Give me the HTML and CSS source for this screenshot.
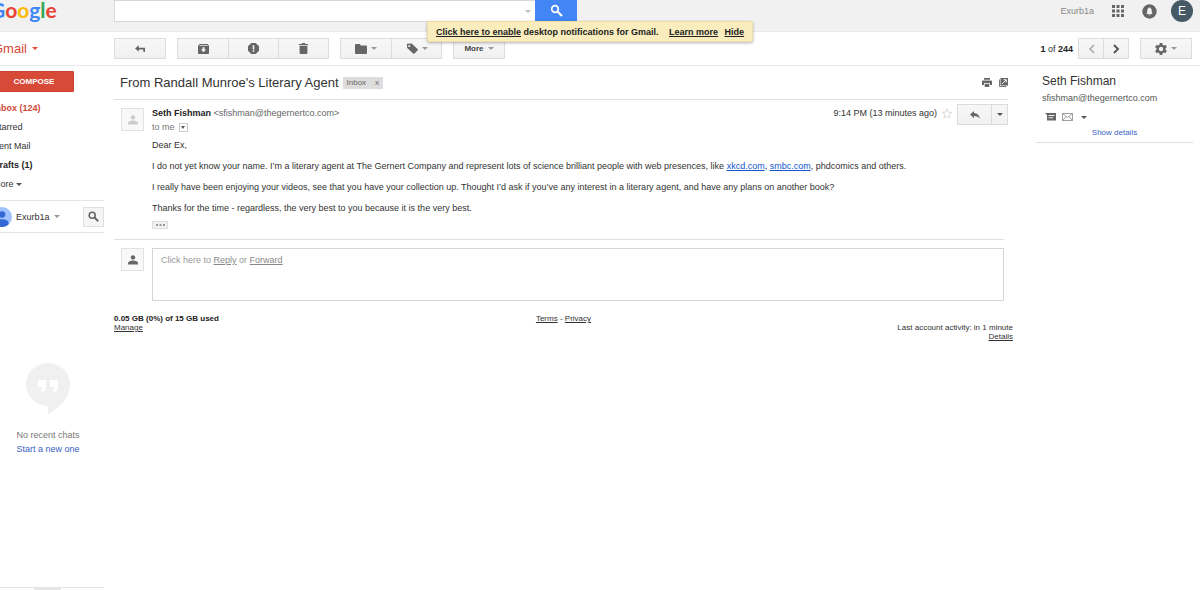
FILE: index.html
```html
<!DOCTYPE html>
<html lang="en">
<head>
  <meta charset="UTF-8" />
  <title>Gmail</title>
  <link rel="stylesheet" href="styles.css">
</head>
<body>

  <header class="topbar">
    <a class="logo" href="#" aria-label="Google"><span class="blue">G</span><span class="red">o</span><span class="yellow">o</span><span class="blue">g</span><span class="green">l</span><span class="red">e</span></a>
    <form class="search">
      <div class="search-box">
        <input type="text" aria-label="Search mail" />
        <span class="caret light"></span>
      </div>
      <button type="button" aria-label="Search">
        <svg width="13" height="13" viewBox="0 0 13 13"><circle cx="5" cy="5" r="3.3" fill="none" stroke="#fff" stroke-width="1.7"/><path d="M7.5 7.5L12 12" stroke="#fff" stroke-width="2.2"/></svg>
      </button>
    </form>
    <nav class="account">
      <a class="account-name" href="#">Exurb1a</a>
      <button type="button" aria-label="Apps">
        <svg width="12" height="12" viewBox="0 0 12 12" fill="#666"><path d="M0 0h3v3H0zM4.500 0h3v3h-3zM9 0h3v3H9zM0 4.500h3v3H0zM4.500 4.500h3v3h-3zM9 4.500h3v3H9zM0 9h3v3H0zM4.500 9h3v3h-3zM9 9h3v3H9z"/></svg>
      </button>
      <button type="button" aria-label="Notifications">
        <svg width="15" height="15" viewBox="0 0 15 15"><circle cx="7.500" cy="7.500" r="7.200" fill="#666"/><path d="M4.300 10h6.400l-.9-1.200V6.700c0-1.400-.7-2.300-1.700-2.600v-.6H6.900v.6c-1 .3-1.700 1.200-1.700 2.600v2.100zM6.600 10.500h1.800v.8H6.600z" fill="#f1f1f1"/></svg>
      </button>
      <button type="button" class="avatar">E</button>
    </nav>
  </header>

  <div class="notice">
    <a href="#">Click here to enable</a> desktop notifications for Gmail. <a class="learn" href="#">Learn more</a> <a class="hide" href="#">Hide</a>
  </div>

  <div class="toolbar">
    <button type="button" class="brand">Gmail <span class="caret red-caret"></span></button>
    <div class="group">
      <button type="button" aria-label="Back to Inbox">
        <svg width="11" height="8" viewBox="0 0 11 8"><path d="M0 3.500L3.800 .3v2.400H10V7H8.300V4.400H3.800v2.300z" fill="#666"/></svg>
      </button>
    </div>
    <div class="group">
      <button type="button" aria-label="Archive">
        <svg width="11" height="10" viewBox="0 0 11 10"><path d="M1.500 0h8L11 1.800V9q0 1-1 1H1q-1 0-1-1V1.800zM1.700 1.100l-.5.6h8.600l-.5-.6zM4.500 3.300v2.200H2.800l2.700 2.700 2.700-2.700H6.500V3.300z" fill="#666" fill-rule="evenodd"/></svg>
      </button>
      <button type="button" aria-label="Report spam">
        <svg width="11" height="11" viewBox="0 0 11 11"><path d="M3.300 0h4.400L11 3.300v4.400L7.700 11H3.300L0 7.700V3.300z" fill="#666"/><path d="M4.700 2.200h1.600v4.200H4.700zM4.700 7.300h1.600v1.500H4.700z" fill="#f4f4f4"/></svg>
      </button>
      <button type="button" aria-label="Delete">
        <svg width="9" height="11" viewBox="0 0 9 11" fill="#666"><path d="M0 1h2.500l.7-1h2.600l.7 1H9v1.300H0zM.6 3h7.800v7q0 1-1 1H1.600q-1 0-1-1z"/></svg>
      </button>
    </div>
    <div class="group">
      <button type="button" aria-label="Move to">
        <svg width="12" height="10" viewBox="0 0 12 10"><path d="M1 0h3.700L6 1.400h5q1 0 1 1V9q0 1-1 1H1Q0 10 0 9V1q0-1 1-1z" fill="#666"/></svg>
        <span class="caret"></span>
      </button>
      <button type="button" aria-label="Labels">
        <svg width="12" height="11" viewBox="0 0 12 11"><path d="M.8.8L5.700.4l5.800 5.600q.7.700 0 1.400l-3 3q-.7.700-1.400 0L1.200 5zM3.200 1.900a1.100 1.100 0 100 2.200 1.100 1.100 0 000-2.200z" fill="#666" fill-rule="evenodd"/></svg>
        <span class="caret"></span>
      </button>
    </div>
    <div class="group">
      <button type="button" class="more">More <span class="caret"></span></button>
    </div>
    <div class="pager"><b>1</b> of <b>244</b></div>
    <div class="group narrow">
      <button type="button" aria-label="Newer">
        <svg width="7" height="10" viewBox="0 0 7 10"><path d="M6 1L2 5l4 4" fill="none" stroke="#aaa" stroke-width="1.600"/></svg>
      </button>
      <button type="button" aria-label="Older">
        <svg width="7" height="10" viewBox="0 0 7 10"><path d="M1 1l4 4-4 4" fill="none" stroke="#555" stroke-width="1.900"/></svg>
      </button>
    </div>
    <div class="group">
      <button type="button" aria-label="Settings">
        <svg width="12" height="12" viewBox="0 0 12 12"><circle cx="6" cy="6" r="3.400" fill="none" stroke="#666" stroke-width="2.400"/><path d="M6 0v2M6 10v2M.8 3l1.700 1M9.500 8l1.700 1M.8 9l1.700-1M9.500 4l1.700-1" stroke="#666" stroke-width="2.800"/></svg>
        <span class="caret"></span>
      </button>
    </div>
  </div>

  <div class="layout">
    <aside class="sidebar">
      <button type="button" class="compose">COMPOSE</button>
      <nav class="folders">
        <a class="current" href="#">Inbox (124)</a>
        <a href="#">Starred</a>
        <a href="#">Sent Mail</a>
        <a class="unread" href="#">Drafts (1)</a>
        <a href="#">More <span class="caret dark"></span></a>
      </nav>
      <div class="chat-user">
        <svg width="20" height="20" viewBox="0 0 20 20"><circle cx="10" cy="10" r="10" fill="#a0c3ff"/><circle cx="10" cy="7.500" r="3.300" fill="#3367d6"/><path d="M3.500 17.500v-1.700c0-2.400 3-3.600 6.500-3.600s6.500 1.200 6.500 3.600v1.700Q13.500 20 10 20t-6.500-2.500z" fill="#3367d6"/></svg>
        <span>Exurb1a</span>
        <span class="caret"></span>
        <button type="button" aria-label="Search chats">
          <svg width="11" height="11" viewBox="0 0 11 11"><circle cx="4.200" cy="4.200" r="3" fill="none" stroke="#666" stroke-width="1.600"/><path d="M6.400 6.400l3.800 3.800" stroke="#666" stroke-width="2"/></svg>
        </button>
      </div>
      <div class="chats">
        <svg width="44" height="51" viewBox="0 0 44 51"><path d="M22 0a22 21.500 0 0122 21.500C44 34 34 45 22 51v-8A22 21.500 0 0122 0z" fill="#f0f0f0"/><path d="M12 17h8v7q0 4-5 5.500v-2.300q2-.9 2-3.200h-5zM24 17h8v7q0 4-5 5.500v-2.300q2-.9 2-3.200h-5z" fill="#fff"/></svg>
        <p>No recent chats</p>
        <a href="#">Start a new one</a>
      </div>
      <div class="chat-tabs"></div>
    </aside>

    <main class="main">
      <div class="subject">
        <h1>From Randall Munroe's Literary Agent</h1>
        <span class="label">Inbox <button type="button" aria-label="Remove label">x</button></span>
        <div class="subject-tools">
          <button type="button" aria-label="Print all">
            <svg width="10" height="9" viewBox="0 0 10 9"><path d="M2 0h6v1.800H2zM1 2.400h8q1 0 1 1V7H8V5H2v2H0V3.400q0-1 1-1zM2.700 5.700h4.600V9H2.700z" fill="#666"/></svg>
          </button>
          <button type="button" aria-label="In new window">
            <svg width="9" height="9" viewBox="0 0 9 9"><path d="M1.500 0H9v7.500H1.500z" fill="#666"/><path d="M.500 1.500v7h7" fill="none" stroke="#777"/><path d="M4.500 1.700h2.800v2.800M7 2L3 6" fill="none" stroke="#fff" stroke-width=".9"/></svg>
          </button>
        </div>
      </div>

      <article class="message">
        <div class="portrait faded">
          <svg width="10" height="10" viewBox="0 0 10 10"><circle cx="5" cy="2.400" r="2.200"/><path d="M0 9.500V8.300C0 6.500 2.700 5.600 5 5.600s5 .9 5 2.700v1.200z"/></svg>
        </div>
        <div class="message-content">
          <div class="message-head">
            <div class="from">
              <p><b>Seth Fishman</b> <span class="address">&lt;sfishman@thegernertco.com&gt;</span></p>
              <p class="to">to me <button type="button" aria-label="Show details"><span class="caret dark"></span></button></p>
            </div>
            <span class="time">9:14 PM (13 minutes ago)</span>
            <button type="button" class="star" aria-label="Star">
              <svg width="12" height="11" viewBox="0 0 12 11"><path d="M6 .8l1.300 3.300 3.600.2-2.800 2.200 1 3.500L6 8.100 2.900 10l1-3.500L1.100 4.300l3.600-.2z" fill="#fff" stroke="#d0d0d0" stroke-width=".8"/></svg>
            </button>
            <div class="group reply-group">
              <button type="button" aria-label="Reply">
                <svg width="10" height="8" viewBox="0 0 10 8"><path d="M4 0v2.100C7.600 2.500 9.400 4.600 9.800 8 8.400 6 6.800 5.100 4 5.100v2.100L0 3.600z" fill="#666"/></svg>
              </button>
              <button type="button" aria-label="More actions"><span class="caret dark"></span></button>
            </div>
          </div>
          <div class="message-text">
            <p>Dear Ex,</p>
            <p>I do not yet know your name. I’m a literary agent at The Gernert Company and represent lots of science brilliant people with web presences, like <a href="#">xkcd.com</a>, <a href="#">smbc.com</a>, phdcomics and others.</p>
            <p>I really have been enjoying your videos, see that you have your collection up. Thought I’d ask if you’ve any interest in a literary agent, and have any plans on another book?</p>
            <p>Thanks for the time - regardless, the very best to you because it is the very best.</p>
          </div>
          <button type="button" class="trimmed" aria-label="Show trimmed content">
            <svg width="9" height="2" viewBox="0 0 9 2" fill="#999"><path d="M0 0h2v2H0zM3.500 0h2v2h-2zM7 0h2v2H7z"/></svg>
          </button>
        </div>
      </article>

      <section class="reply">
        <div class="portrait">
          <svg width="10" height="10" viewBox="0 0 10 10"><circle cx="5" cy="2.400" r="2.200"/><path d="M0 9.500V8.300C0 6.500 2.700 5.600 5 5.600s5 .9 5 2.700v1.200z"/></svg>
        </div>
        <div class="reply-box">Click here to <a href="#">Reply</a> or <a href="#">Forward</a></div>
      </section>

      <footer class="footer">
        <div><b>0.05 GB (0%) of 15 GB used</b><br><a href="#">Manage</a></div>
        <div class="legal"><a href="#">Terms</a> - <a href="#">Privacy</a></div>
        <div class="activity">Last account activity: in 1 minute<br><a href="#">Details</a></div>
      </footer>
    </main>

    <aside class="person">
      <h2>Seth Fishman</h2>
      <p>sfishman@thegernertco.com</p>
      <div class="person-tools">
        <button type="button" aria-label="Chat">
          <svg width="11" height="8" viewBox="0 0 11 8"><path d="M0 0h11v7.500H2V2z" fill="#666"/><path d="M3.500 2.500h6M3.500 4.800h4.500" stroke="#fff" stroke-width=".9"/></svg>
        </button>
        <button type="button" aria-label="Email">
          <svg width="11" height="8" viewBox="0 0 11 8"><path d="M.5.500h10v7H.500zM.500.500l5 4 5-4M.500 7.500l3.500-4M10.500 7.500L7 3.500" fill="none" stroke="#888" stroke-width=".8"/></svg>
        </button>
        <button type="button" aria-label="More"><span class="caret dark"></span></button>
      </div>
      <a class="details" href="#">Show details</a>
    </aside>
  </div>

</body>
</html>
```
FILE: styles.css
```css
* {
  box-sizing: border-box;
}

body {
  margin: 0;
  min-height: 100vh;
  display: flex;
  flex-direction: column;
  overflow: hidden;
  background: #fff;
  color: #333;
  font-family: "Liberation Sans", Arial, sans-serif;
  font-size: 9px;
  line-height: 12px;
}

h1, h2, p {
  margin: 0;
  font-weight: normal;
}

b {
  color: #222;
}

button {
  display: flex;
  align-items: center;
  justify-content: center;
  padding: 0;
  border: 0;
  background: none;
  color: inherit;
  font: inherit;
  cursor: pointer;
}

svg {
  display: block;
  flex: none;
}

.caret {
  display: inline-block;
  border: 3px solid transparent;
  border-top-color: #999;
  border-bottom: 0;
  vertical-align: middle;
}

.caret.light {
  border-top-color: #bbb;
}

.caret.dark {
  border-top-color: #555;
}

.red-caret {
  border-top-color: #dd4b39;
}

/* Top bar */
.topbar {
  display: flex;
  align-items: flex-start;
  height: 32px;
  padding-right: 7px;
  background: #f1f1f1;
  border-bottom: 1px solid #e8e8e8;
}

.logo {
  width: 124px;
  margin-left: -10px;
  font-family: Lato, sans-serif;
  font-size: 21px;
  font-weight: 700;
  line-height: 20px;
  text-decoration: none;
}

.blue { color: #4285f4; }
.red { color: #ea4335; }
.yellow { color: #fbbc05; }
.green { color: #34a853; }

.search {
  display: flex;
  flex: 0 1 463px;
}

.search-box {
  display: flex;
  align-items: center;
  flex: 1;
  height: 22px;
  padding-right: 4px;
  background: #fff;
  border: 1px solid #d9d9d9;
  border-right: 0;
}

.search-box input {
  flex: 1;
  min-width: 0;
  border: 0;
  outline: 0;
  font: inherit;
}

.search button {
  width: 42px;
  height: 21px;
  background: #4285f4;
}

.account {
  display: flex;
  align-items: center;
  gap: 18px;
  height: 22px;
  margin-left: auto;
}

.account-name {
  color: #888;
  text-decoration: none;
}

.avatar {
  width: 22px;
  height: 22px;
  margin-left: -4px;
  border-radius: 50%;
  background: #455a64;
  color: #fff;
  font-size: 12px;
}

.notice {
  position: absolute;
  top: 21px;
  left: 427px;
  padding: 4px 8px 3px;
  border: 1px solid #f0dfa5;
  border-radius: 2px;
  background: #f9edbe;
  box-shadow: 0 1px 3px rgba(0, 0, 0, 0.3);
  color: #222;
  font-weight: bold;
  white-space: nowrap;
}

.notice a {
  color: inherit;
}

.learn {
  margin: 0 4px 0 8px;
}

/* Toolbar */
.toolbar {
  display: flex;
  align-items: center;
  gap: 11px;
  height: 34px;
  padding-right: 8px;
  border-bottom: 1px solid #e8e8e8;
}

.brand {
  justify-content: flex-start;
  gap: 5px;
  width: 110px;
  margin-left: -7px;
  color: #d14836;
  font-size: 13px;
}

.group {
  display: flex;
}

.group button {
  gap: 4px;
  width: 51px;
  height: 21px;
  margin-left: -1px;
  border: 1px solid #dcdcdc;
  background: linear-gradient(#f7f7f7, #f1f1f1);
}

.group button:first-child {
  width: 52px;
  margin-left: 0;
}

.group.narrow button {
  width: 26px;
}

.group .more {
  color: #444;
  font-size: 8px;
  font-weight: bold;
}

.pager {
  margin-left: auto;
  margin-right: -6px;
}

/* Page columns */
.layout {
  display: grid;
  grid-template-columns: 104px 1fr 157px;
  flex: 1;
  padding-right: 7px;
}

.sidebar {
  display: flex;
  flex-direction: column;
}

.compose {
  width: 80px;
  height: 21px;
  margin: 5px 0 7px -6px;
  border: 1px solid #c9402f;
  border-radius: 1px;
  background: #d84a38;
  color: #fff;
  font-size: 8px;
  font-weight: bold;
}

.folders {
  display: flex;
  flex-direction: column;
  margin-left: -7px;
  padding-bottom: 6px;
}

.folders a {
  line-height: 19px;
  color: #333;
  text-decoration: none;
}

.folders .current {
  color: #d14836;
  font-weight: bold;
}

.folders .unread {
  color: #222;
  font-weight: bold;
}

.chat-user {
  display: flex;
  align-items: center;
  gap: 4px;
  height: 33px;
  margin-left: -8px;
  border-top: 1px solid #e5e5e5;
  border-bottom: 1px solid #e5e5e5;
}

.chat-user button {
  width: 21px;
  height: 20px;
  margin-left: auto;
  border: 1px solid #e0e0e0;
  background: #f5f5f5;
}

.chats {
  display: flex;
  flex-direction: column;
  align-items: center;
  flex: 1;
  padding: 130px 8px 0 0;
  color: #777;
  line-height: 14px;
}

.chats p {
  margin-top: 14px;
}

.chats a,
.details {
  color: #3a5fc4;
  text-decoration: none;
}

.chat-tabs {
  height: 3px;
  border-top: 1px solid #e5e5e5;
}

.chat-tabs::before {
  content: "";
  display: block;
  width: 27px;
  height: 2px;
  margin-left: 34px;
  background: #e5e5e5;
}

/* Message */
.main {
  padding: 0 28px 0 10px;
}

.subject {
  display: flex;
  align-items: center;
  gap: 4px;
  height: 34px;
  padding-left: 6px;
  border-bottom: 1px solid #e0e0e0;
}

.subject h1 {
  font-size: 13px;
}

.label {
  display: flex;
  gap: 9px;
  padding: 0 4px;
  background: #ddd;
  color: #666;
  font-size: 8px;
}

.subject-tools {
  display: flex;
  gap: 7px;
  margin-left: auto;
}

.message,
.reply {
  display: flex;
  gap: 8px;
  margin-right: 4px;
  padding-left: 7px;
}

.portrait {
  display: flex;
  align-items: center;
  justify-content: center;
  flex: none;
  width: 23px;
  height: 23px;
  border: 1px solid #e2e2e2;
  background: #f8f8f8;
  fill: #666;
}

.portrait.faded {
  fill: #ccc;
}

.message {
  padding-top: 8px;
  padding-bottom: 10px;
  border-bottom: 1px solid #e0e0e0;
}

.message-content {
  flex: 1;
}

.message-head {
  display: flex;
  align-items: flex-start;
  margin: -4px -4px 0 0;
}

.from {
  flex: 1;
}

.from p {
  padding-top: 2px;
  line-height: 14px;
}

.from .to {
  display: flex;
  align-items: center;
  gap: 4px;
  padding: 0;
  color: #777;
}

.address {
  color: #666;
}

.to button {
  width: 9px;
  height: 9px;
  border: 1px solid #ccc;
}

.to .caret {
  border-width: 3px 2px 0;
}

.time {
  padding-top: 3px;
}

.star {
  margin: 4px 4px 0;
}

.reply-group button:first-child {
  width: 35px;
}

.reply-group button + button {
  width: 17px;
}

.message-text p {
  margin-top: 9px;
}

.message-text p:first-child {
  margin-top: 5px;
}

.message-text a {
  color: #15c;
}

.trimmed {
  width: 16px;
  height: 8px;
  margin-top: 7px;
  border: 1px solid #ddd;
  background: #f1f1f1;
}

.reply {
  padding-top: 8px;
}

.reply-box {
  flex: 1;
  height: 53px;
  padding: 5px 8px;
  border: 1px solid #d5d5d5;
  color: #999;
}

.reply-box a {
  color: #888;
}

.footer {
  display: grid;
  grid-template-columns: 1fr 1fr 1fr;
  margin: 13px -5px 0 0;
  font-size: 8px;
  line-height: 9px;
}

.footer a {
  color: inherit;
}

.legal {
  text-align: center;
}

.activity {
  padding-top: 9px;
  text-align: right;
}

/* Contact panel */
.person {
  display: flex;
  flex-direction: column;
  align-self: start;
  padding: 7px 6px 3px;
  border-bottom: 1px solid #e0e0e0;
}

.person h2 {
  font-size: 12px;
  line-height: 16px;
}

.person p {
  margin-top: 3px;
  color: #555;
}

.person-tools {
  display: flex;
  gap: 6px;
  margin: 9px 0 6px 3px;
}

.person-tools button:last-child {
  margin-left: 2px;
}

.details {
  align-self: center;
  font-size: 8px;
}
```
